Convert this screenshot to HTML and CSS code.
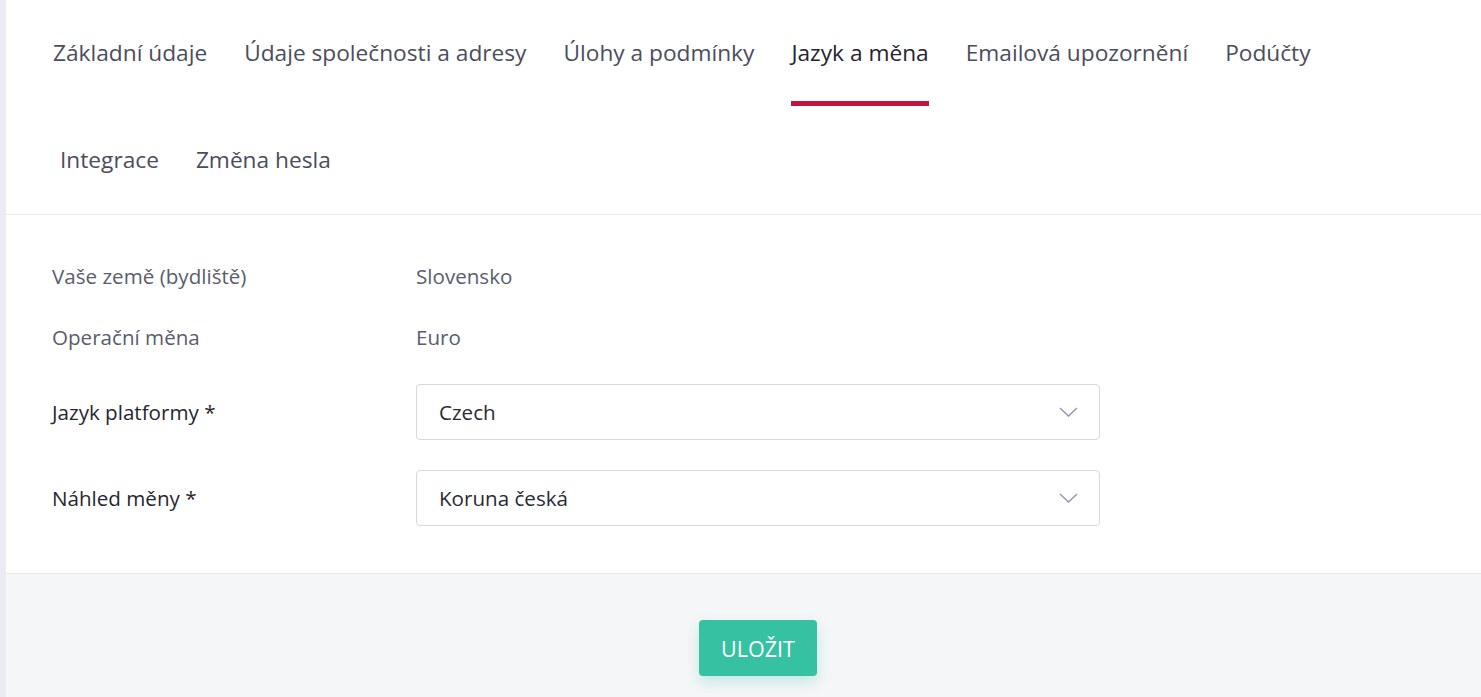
FILE: index.html
```html
<!DOCTYPE html>
<html lang="cs">
<head>
<meta charset="utf-8">
<link rel="stylesheet" href="styles.css">
</head>
<body>
<div class="page">
  <div class="card">
    <nav class="tabs">
      <a class="tab">Základní údaje</a>
      <a class="tab">Údaje společnosti a adresy</a>
      <a class="tab">Úlohy a podmínky</a>
      <a class="tab active">Jazyk a měna</a>
      <a class="tab">Emailová upozornění</a>
      <a class="tab">Podúčty</a>
      <a class="tab tab-wrap">Integrace</a>
      <a class="tab">Změna hesla</a>
    </nav>
    <form class="form">
      <div class="row">
        <div class="label muted">Vaše země (bydliště)</div>
        <div class="value">Slovensko</div>
      </div>
      <div class="row">
        <div class="label muted">Operační měna</div>
        <div class="value">Euro</div>
      </div>
      <div class="row row-first-select">
        <div class="label">Jazyk platformy *</div>
        <div class="select"><span>Czech</span>
          <svg class="chev" width="19" height="10" viewBox="0 0 19 10"><path d="M1 1 L9.5 9 L18 1" fill="none" stroke="#8d92b2" stroke-width="1.3"/></svg>
        </div>
      </div>
      <div class="row">
        <div class="label">Náhled měny *</div>
        <div class="select"><span>Koruna česká</span>
          <svg class="chev" width="19" height="10" viewBox="0 0 19 10"><path d="M1 1 L9.5 9 L18 1" fill="none" stroke="#8d92b2" stroke-width="1.3"/></svg>
        </div>
      </div>
    </form>
    <div class="footer">
      <button class="btn" type="button">ULOŽIT</button>
    </div>
  </div>
</div>
</body>
</html>
```
FILE: styles.css
```css
html, body {
  margin: 0;
  padding: 0;
  height: 100%;
}
body {
  font-family: "Open Sans", "Noto Sans", sans-serif;
  background: #ebebf3;
  color: #4b4d5c;
}
.page {
  padding-left: 6px;
  height: 100%;
}
.card {
  background: #fff;
  height: 100%;
  display: flex;
  flex-direction: column;
}
.tabs {
  display: flex;
  flex-wrap: wrap;
  padding: 0 40px 0 47px;
  column-gap: 37px;
  border-bottom: 1px solid #ebebf0;
}
.tab {
  display: block;
  height: 107px;
  box-sizing: border-box;
  padding-top: 37px;
  font-size: 22.7px;
  line-height: 32px;
  color: #4b4d5c;
  cursor: pointer;
  position: relative;
}
.tab.active {
  color: #24242e;
}
.tab.active::after {
  content: "";
  position: absolute;
  left: 0;
  right: 0;
  top: 101px;
  height: 5px;
  background: #c1143f;
}
.tab-wrap {
  margin-left: 7px;
}
.form {
  padding: 46px 46px 47px 46px;
  display: flex;
  flex-direction: column;
  gap: 31px;
}
.row {
  display: flex;
  align-items: center;
}
.row-first-select {
  margin-top: 1px;
}
.row-first-select + .row {
  margin-top: -1px;
}
.label {
  width: 364px;
  font-size: 20.6px;
  line-height: 30px;
  color: #26262f;
}
.label.muted {
  color: #5a5d6b;
}
.value {
  font-size: 20.6px;
  line-height: 30px;
  color: #5a5d6b;
}
.select {
  width: 684px;
  height: 56px;
  box-sizing: border-box;
  border: 1px solid #d6d8e3;
  border-radius: 4px;
  display: flex;
  align-items: center;
  justify-content: space-between;
  padding: 0 21px 0 22px;
  font-size: 20.6px;
  color: #2a2a33;
}
.footer {
  flex: 1;
  background: #f5f6f8;
  border-top: 1px solid #e8e8ec;
  display: flex;
  justify-content: center;
  padding-top: 46px;
  padding-left: 29px;
}
.btn {
  width: 118px;
  height: 56px;
  border: none;
  border-radius: 4px;
  background: #36c1a2;
  color: #fff;
  font-family: "Open Sans", sans-serif;
  font-size: 21.5px;
  box-shadow: 0 6px 14px rgba(54, 193, 162, 0.25);
}
```
